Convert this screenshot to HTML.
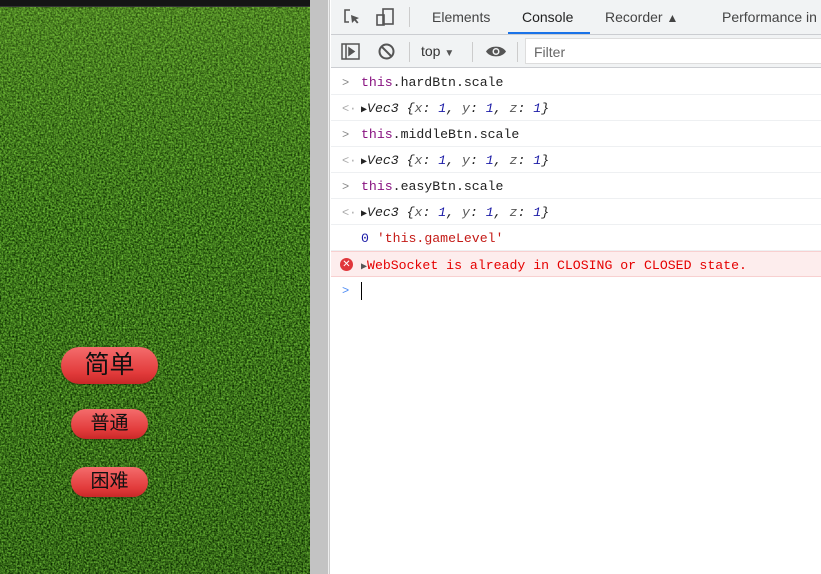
<!DOCTYPE html>
<html><head><meta charset="utf-8"><style>
*{margin:0;padding:0;box-sizing:border-box}
body{width:821px;height:574px;overflow:hidden;position:relative;background:#fff;font-family:"Liberation Sans",sans-serif}
#game{position:absolute;left:0;top:0;width:310px;height:574px;background:#3f7a1e;overflow:hidden}
#bar{position:absolute;left:0;top:0;width:310px;height:7px;background:#151515;border-bottom:1px solid #333}
#sep{position:absolute;left:310px;top:0;width:18px;height:574px;background:#c3c3c3}
#sep2{position:absolute;left:328px;top:0;width:2px;height:574px;background:#eee;border-right:1px solid #ccc}
.btn{position:absolute;background:linear-gradient(#f46c6c,#e23b3b 70%,#c92828);border-radius:20px;color:#111;text-align:center;font-family:"Liberation Sans","Noto Sans CJK SC",sans-serif;box-shadow:0 1px 1px rgba(0,0,0,.3)}
#dt{position:absolute;left:331px;top:0;right:0;height:574px}
.tabs{height:35px;background:#f1f3f4;border-bottom:1px solid #cbcdd1;position:relative;font-size:14px;color:#444}
.tabs span{position:absolute;top:9px}
.tb{position:absolute;top:35px;left:0;right:0;height:33px;background:#f1f3f4;border-bottom:1px solid #cbcdd1;font-size:14px;color:#333}
.row{position:absolute;left:0;right:0;height:26px;border-bottom:1px solid #eef0f2;font-family:"Liberation Mono",monospace;font-size:13.2px;line-height:26px;padding-top:1px;padding-left:30px;color:#222;white-space:nowrap}
.p{color:#881280}.n{color:#1a1aa6}.i{font-style:italic}
.ar{position:absolute;left:11px;color:#888;font-size:12px}
</style></head><body>
<div id="game">
<svg width="310" height="574" style="position:absolute;left:0;top:0">
<defs>
<filter id="g" x="0" y="0" width="100%" height="100%" color-interpolation-filters="sRGB">
<feTurbulence type="fractalNoise" baseFrequency="0.55" numOctaves="3" seed="3"/>
<feColorMatrix values="0.7 0 0 0 -0.12  1.0 0 0 0 -0.05  0.4 0 0 0 -0.1  0 0 0 0 1"/>
</filter>
<linearGradient id="lg" x1="0" y1="0" x2="0" y2="1"><stop offset="0" stop-color="#8cc040" stop-opacity="0.25"/><stop offset="0.4" stop-color="#6aa030" stop-opacity="0.05"/><stop offset="1" stop-color="#000" stop-opacity="0.08"/></linearGradient>
</defs>
<rect width="310" height="574" fill="#3f7a1e"/>
<rect width="310" height="574" filter="url(#g)"/>
<rect width="310" height="574" fill="url(#lg)"/>
</svg>
<div id="bar"></div>
<div class="btn" style="left:61px;top:347px;width:97px;height:37px;font-size:25px;line-height:37px">简单</div>
<div class="btn" style="left:71px;top:409px;width:77px;height:30px;font-size:19px;line-height:30px">普通</div>
<div class="btn" style="left:71px;top:467px;width:77px;height:30px;font-size:19px;line-height:30px">困难</div>
</div>
<div id="sep"></div><div id="sep2"></div>
<div id="dt">
<div class="tabs">
<svg style="position:absolute;left:12px;top:8px" width="18" height="18" viewBox="0 0 18 18" fill="none" stroke="#555" stroke-width="1.6"><path d="M7 2H2v12h4"/><path d="M8 7l8 3-3 1.5 2.5 3-1.5 1-2.5-3L9 15z" fill="#555" stroke="none"/></svg>
<svg style="position:absolute;left:44px;top:7px" width="20" height="20" viewBox="0 0 20 20" fill="none" stroke="#555" stroke-width="1.6"><rect x="8" y="2" width="10" height="15"/><rect x="2" y="8" width="7" height="10"/></svg>
<div style="position:absolute;left:78px;top:7px;width:1px;height:20px;background:#ccc"></div>
<span style="left:101px">Elements</span>
<span style="left:191px;color:#222">Console</span>
<div style="position:absolute;left:177px;top:32px;width:82px;height:2px;background:#1a73e8"></div>
<span style="left:274px">Recorder <b style="font-size:12px">&#9650;</b></span>
<span style="left:391px;white-space:nowrap">Performance in</span>
</div>
<div class="tb">
<svg style="position:absolute;left:10px;top:8px" width="19" height="17" viewBox="0 0 19 17" fill="none" stroke="#555" stroke-width="1.5"><rect x="1" y="1" width="17" height="15"/><path d="M5 1v15"/><path d="M8 5l5 3.5-5 3.5z" fill="#555"/></svg>
<svg style="position:absolute;left:47px;top:8px" width="17" height="17" viewBox="0 0 17 17" fill="none" stroke="#555" stroke-width="2"><circle cx="8.5" cy="8.5" r="7"/><path d="M3.5 3.5l10 10"/></svg>
<div style="position:absolute;left:78px;top:7px;width:1px;height:20px;background:#ccc"></div>
<span style="position:absolute;left:90px;top:8px">top <span style="font-size:10px;color:#555">&#9660;</span></span>
<div style="position:absolute;left:141px;top:7px;width:1px;height:20px;background:#ccc"></div>
<svg style="position:absolute;left:154px;top:9px" width="22" height="15" viewBox="0 0 22 15"><path d="M1 7.5C5 1 17 1 21 7.5 17 14 5 14 1 7.5z" fill="#555"/><circle cx="11" cy="7.5" r="3.5" fill="#f1f3f4"/><circle cx="11" cy="7.5" r="2" fill="#555"/></svg>
<div style="position:absolute;left:186px;top:7px;width:1px;height:20px;background:#ccc"></div>
<div style="position:absolute;left:194px;top:3px;right:0;height:26px;background:#fff;border:1px solid #ddd;border-right:none;padding:5px 8px;color:#666">Filter</div>
</div>
<div class="row" style="top:69px"><span class="ar">&gt;</span><span class="p">this</span>.hardBtn.scale</div>
<div class="row" style="top:95px"><span class="ar" style="color:#aaa">&lt;·</span><span style="font-size:10px">&#9654;</span><span class="i">Vec3 {<span style="color:#555">x</span>: <span class="n">1</span>, <span style="color:#555">y</span>: <span class="n">1</span>, <span style="color:#555">z</span>: <span class="n">1</span>}</span></div>
<div class="row" style="top:121px"><span class="ar">&gt;</span><span class="p">this</span>.middleBtn.scale</div>
<div class="row" style="top:147px"><span class="ar" style="color:#aaa">&lt;·</span><span style="font-size:10px">&#9654;</span><span class="i">Vec3 {<span style="color:#555">x</span>: <span class="n">1</span>, <span style="color:#555">y</span>: <span class="n">1</span>, <span style="color:#555">z</span>: <span class="n">1</span>}</span></div>
<div class="row" style="top:173px"><span class="ar">&gt;</span><span class="p">this</span>.easyBtn.scale</div>
<div class="row" style="top:199px"><span class="ar" style="color:#aaa">&lt;·</span><span style="font-size:10px">&#9654;</span><span class="i">Vec3 {<span style="color:#555">x</span>: <span class="n">1</span>, <span style="color:#555">y</span>: <span class="n">1</span>, <span style="color:#555">z</span>: <span class="n">1</span>}</span></div>
<div class="row" style="top:225px"><span class="n">0</span> <span style="color:#c41a16">'this.gameLevel'</span></div>
<div class="row" style="top:251px;background:#fdeded;border-top:1px solid #f8d0d0;border-bottom:1px solid #f8d0d0;color:#e50000"><span style="position:absolute;left:9px;top:6px;width:13px;height:13px;border-radius:50%;background:#e0373c;color:#fff;font-size:10px;line-height:13px;text-align:center;font-family:'Liberation Sans'">✕</span><span style="font-size:10px;color:#555">&#9654;</span>WebSocket is already in CLOSING or CLOSED state.</div>
<div class="row" style="top:277px;border:none"><span class="ar" style="color:#4c8bf5">&gt;</span><span style="display:inline-block;width:1px;height:18px;background:#000;vertical-align:middle"></span></div>
</div>
</body></html>
